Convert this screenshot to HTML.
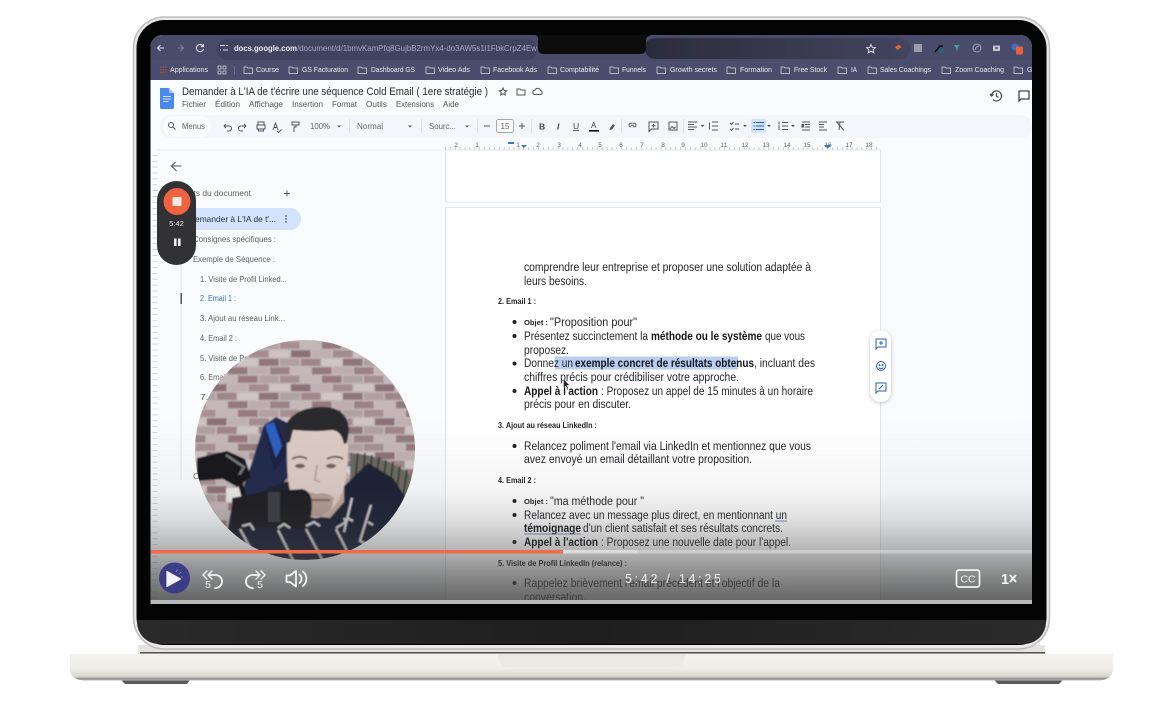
<!DOCTYPE html>
<html lang="fr"><head><meta charset="utf-8"><title>Demander à L'IA</title>
<style>
html,body{margin:0;padding:0;background:#fff;width:1173px;height:705px;overflow:hidden}
svg{display:block;font-family:"Liberation Sans",sans-serif}
.d{font-size:11.5px;fill:#25262a}
.db{font-size:11.5px;fill:#15161a;font-weight:bold}
.h{font-size:8px;fill:#25262a;font-weight:bold}
.o{font-size:7.5px;fill:#25262a;font-weight:bold}
.bm{font-size:7px;fill:#e8e9f0}
.m{font-size:8.5px;fill:#555}
.tb{font-size:8px;fill:#666}
.s{font-size:8.5px;fill:#5c5f63}
.ic{fill:none;stroke:#555;stroke-width:1}
.bi{fill:none;stroke:#d8dae4;stroke-width:.7}
.r{font-size:6.5px;fill:#666}
.w{fill:none;stroke:#f2f2f2;stroke-width:1.8;stroke-linecap:round;stroke-linejoin:round}
.ca{fill:none;stroke:#2a62b5;stroke-width:1}
</style></head><body>
<svg width="1173" height="705" viewBox="0 0 1173 705" xmlns="http://www.w3.org/2000/svg">
<defs>
<linearGradient id="base" x1="0" y1="0" x2="0" y2="1"><stop offset="0" stop-color="#f4f2ed"/><stop offset=".55" stop-color="#efede8"/><stop offset=".85" stop-color="#d9d6d1"/><stop offset=".94" stop-color="#8d8b87"/><stop offset="1" stop-color="#c9c7c3"/></linearGradient>
<linearGradient id="fade" x1="0" y1="0" x2="0" y2="1"><stop offset="0" stop-color="#444" stop-opacity="0"/><stop offset=".38" stop-color="#444" stop-opacity=".05"/><stop offset=".54" stop-color="#444" stop-opacity=".17"/><stop offset=".71" stop-color="#444" stop-opacity=".4"/><stop offset=".84" stop-color="#444" stop-opacity=".62"/><stop offset="1" stop-color="#444" stop-opacity=".85"/></linearGradient>
<linearGradient id="omni" x1="0" y1="0" x2="1" y2="0"><stop offset="0" stop-color="#2b2c3a"/><stop offset="1" stop-color="#43455f"/></linearGradient>
<linearGradient id="chin" x1="0" y1="0" x2="1" y2="0"><stop offset="0" stop-color="#2a2a2a"/><stop offset=".5" stop-color="#1e1e1e"/><stop offset="1" stop-color="#2b2b2b"/></linearGradient>
<clipPath id="scr"><path d="M150.500 604V47a12 12 0 0 1 12-12H1020a12 12 0 0 1 12 12V604z"/></clipPath>
<clipPath id="circ"><circle cx="305" cy="450" r="110"/></clipPath>
<filter id="soft" x="-2%" y="-2%" width="104%" height="104%"><feGaussianBlur stdDeviation=".3"/></filter>
<filter id="soft2" x="-5%" y="-5%" width="110%" height="110%"><feGaussianBlur stdDeviation=".8"/></filter>
<filter id="sh" x="-40%" y="-20%" width="180%" height="140%"><feDropShadow dx="0" dy="1" stdDeviation="2" flood-color="#000" flood-opacity=".22"/></filter>
<pattern id="brick" width="84" height="34" patternUnits="userSpaceOnUse" x="196" y="341">
<rect width="84" height="34" fill="#c2b8b9"/>
<g>
<rect x="0" y="0.8" width="19.5" height="7" fill="#a68f93"/><rect x="21" y="0.8" width="19.5" height="7" fill="#c4b5b7"/><rect x="42" y="0.8" width="19.5" height="7" fill="#97797f"/><rect x="63" y="0.8" width="19.5" height="7" fill="#b2a0a3"/>
<rect x="-10" y="9.3" width="19.5" height="7" fill="#cfc3c4"/><rect x="11" y="9.3" width="19.5" height="7" fill="#8c7078"/><rect x="32" y="9.3" width="19.5" height="7" fill="#c0b0b2"/><rect x="53" y="9.3" width="19.5" height="7" fill="#a48b90"/><rect x="74" y="9.3" width="19.5" height="7" fill="#cfc3c4"/>
<rect x="0" y="17.8" width="19.5" height="7" fill="#b0a0a2"/><rect x="21" y="17.8" width="19.5" height="7" fill="#a08589"/><rect x="42" y="17.8" width="19.5" height="7" fill="#d0c5c6"/><rect x="63" y="17.8" width="19.5" height="7" fill="#8f757b"/>
<rect x="-10" y="26.3" width="19.5" height="7" fill="#9b8287"/><rect x="11" y="26.3" width="19.5" height="7" fill="#c6b8b9"/><rect x="32" y="26.3" width="19.5" height="7" fill="#94797e"/><rect x="53" y="26.3" width="19.5" height="7" fill="#bdadaf"/><rect x="74" y="26.3" width="19.5" height="7" fill="#9b8287"/>
</g></pattern>
</defs>

<!-- base -->
<path d="M121 680h69l-3 4h-62z" fill="#5a5b5e"/>
<path d="M994 680h69l-4 4h-61z" fill="#5a5b5e"/>
<rect x="138" y="645" width="907" height="9" fill="#e6e4df"/>
<rect x="140" y="652" width="905" height="1.500" fill="#55534f"/>
<path d="M70 654H1113V668c0 8-5 12-14 12.500H84C75 680 70 676 70 668z" fill="url(#base)"/>
<path d="M497 654H686l-3 8a6 6 0 0 1-6 5H506a6 6 0 0 1-6-5z" fill="#ebe9e4"/>

<!-- Lid -->
<rect x="133.500" y="17" width="916" height="632" rx="31" fill="#e9e8e6" stroke="#bdbdbd" stroke-width="1.500"/>
<rect x="136.500" y="20" width="910" height="625" rx="28" fill="#040404"/>
<path d="M137 620H1046V622a22 22 0 0 1-22 22H159a22 22 0 0 1-22-22z" fill="url(#chin)"/>

<!-- Screen -->
<g clip-path="url(#scr)">
<rect x="150" y="35" width="882" height="570" fill="#f9fbfd"/>
<g filter="url(#soft)">
<rect x="150" y="35" width="882" height="25" fill="#4a4c6a"/>
<rect x="150" y="60" width="882" height="20" fill="#4c4e6c"/>
<rect x="217" y="39" width="320" height="21" rx="10" fill="#414360"/>
<rect x="645" y="38" width="265" height="21" rx="10" fill="url(#omni)"/>
<path d="M533 35H650V36a4 4 0 0 0-4 4V49a5 5 0 0 1-5 5H543a5 5 0 0 1-5-5V40a4 4 0 0 0-5-5z" fill="#08080a"/>
<g fill="none" stroke="#d8dae4" stroke-width="1.100">
<path d="M164 48h-6m2.500-3l-3 3 3 3"/><path d="M178 48h5m-2.500-3l3 3-3 3" stroke="#7f8198"/>
<path d="M203 46a3.600 3.600 0 1 0 .5 3M203.500 44v2.600h-2.600"/>
<path d="M220 45.500h5M223 50h5M226 45.500h2M220 50h1"/>
</g>
<text x="234" y="51" font-size="8.500" fill="#eceef5" font-weight="bold" textLength="63" lengthAdjust="spacingAndGlyphs">docs.google.com</text>
<text x="297" y="51" font-size="8.500" fill="#a7a9bd" textLength="240" lengthAdjust="spacingAndGlyphs">/document/d/1bmvKamPfq8GujbB2rmYx4-do3AW5s1l1FbkCrpZ4Ew</text>
<path d="M871 44.500l1.300 2.900 3.100.3-2.300 2.100.7 3-2.800-1.600-2.800 1.600.7-3-2.300-2.100 3.100-.3z" fill="none" stroke="#e6e7ef" stroke-width=".9"/>
<path d="M895 47l4-2.500 2.500 2.500-4 3z" fill="#e3642f"/>
<rect x="914" y="44" width="8" height="8" fill="#9a9cae"/>
<path d="M935 52l5-6 3 0" stroke="#111" stroke-width="1.400" fill="none"/><circle cx="941" cy="51" r="2.500" fill="#226a6e"/>
<path d="M954 45h6l-2 2-1 5-1-4z" fill="#3aa5a5"/>
<circle cx="977" cy="48" r="4" fill="none" stroke="#9a9cae"/><path d="M975 50l1.500-3 3-1.500" stroke="#9a9cae" fill="none"/>
<rect x="993" y="45.500" width="7" height="5.500" rx="1" fill="#c8c9d4"/><circle cx="996.500" cy="48" r="1.300" fill="#55566e"/>
<circle cx="1015" cy="47" r="3.500" fill="#3d6fb8"/><rect x="1016" y="46.500" width="7" height="8" rx="1" fill="#e8603c"/>

<!-- bookmarks -->
<g fill="#9a4a4a"><rect x="160" y="66.500" width="1.500" height="1.500"/><rect x="162.500" y="66.500" width="1.500" height="1.500"/><rect x="165" y="66.500" width="1.500" height="1.500"/><rect x="160" y="69" width="1.500" height="1.500"/><rect x="162.500" y="69" width="1.500" height="1.500"/><rect x="165" y="69" width="1.500" height="1.500"/><rect x="160" y="71.500" width="1.500" height="1.500"/><rect x="162.500" y="71.500" width="1.500" height="1.500"/><rect x="165" y="71.500" width="1.500" height="1.500"/></g>
<text x="170" y="72" class="bm" textLength="38" lengthAdjust="spacingAndGlyphs">Applications</text>
<g class="bi"><rect x="218" y="66" width="3" height="3"/><rect x="223" y="66" width="3" height="3"/><rect x="218" y="71" width="3" height="3"/><rect x="223" y="71" width="3" height="3"/></g>
<rect x="234" y="66" width=".8" height="9" fill="#777990"/>
<g class="bi">
<path d="M244 67h3l1 1h4.500v5.500H244z"/>
<path d="M289 67h3l1 1h4.500v5.500H289z"/><path d="M358 67h3l1 1h4.500v5.500H358z"/><path d="M426 67h3l1 1h4.500v5.500H426z"/><path d="M481 67h3l1 1h4.500v5.500H481z"/><path d="M548 67h3l1 1h4.500v5.500H548z"/><path d="M610 67h3l1 1h4.500v5.500H610z"/><path d="M657 67h3l1 1h4.500v5.500H657z"/><path d="M727 67h3l1 1h4.500v5.500H727z"/><path d="M781 67h3l1 1h4.500v5.500H781z"/><path d="M838 67h3l1 1h4.500v5.500H838z"/><path d="M868 67h3l1 1h4.500v5.500H868z"/><path d="M942 67h3l1 1h4.500v5.500H942z"/><path d="M1014 67h3l1 1h4.500v5.500H1014z"/>
</g>
<text x="256" y="72" class="bm" textLength="23" lengthAdjust="spacingAndGlyphs">Course</text>
<text x="302" y="72" class="bm" textLength="46" lengthAdjust="spacingAndGlyphs">GS Facturation</text>
<text x="371" y="72" class="bm" textLength="44" lengthAdjust="spacingAndGlyphs">Dashboard GS</text>
<text x="438" y="72" class="bm" textLength="32" lengthAdjust="spacingAndGlyphs">Video Ads</text>
<text x="493" y="72" class="bm" textLength="44" lengthAdjust="spacingAndGlyphs">Facebook Ads</text>
<text x="560" y="72" class="bm" textLength="39" lengthAdjust="spacingAndGlyphs">Comptabilité</text>
<text x="622" y="72" class="bm" textLength="24" lengthAdjust="spacingAndGlyphs">Funnels</text>
<text x="670" y="72" class="bm" textLength="47" lengthAdjust="spacingAndGlyphs">Growth secrets</text>
<text x="740" y="72" class="bm" textLength="32" lengthAdjust="spacingAndGlyphs">Formation</text>
<text x="794" y="72" class="bm" textLength="33" lengthAdjust="spacingAndGlyphs">Free Stock</text>
<text x="851" y="72" class="bm" textLength="6" lengthAdjust="spacingAndGlyphs">IA</text>
<text x="880" y="72" class="bm" textLength="51" lengthAdjust="spacingAndGlyphs">Sales Coachings</text>
<text x="955" y="72" class="bm" textLength="49" lengthAdjust="spacingAndGlyphs">Zoom Coaching</text>
<text x="1027" y="72" class="bm">G</text>

<!-- docs header -->
<rect x="150" y="80" width="882" height="35" fill="#f9fbfd"/>
<path d="M160 88h9l5 5v14.500a1.500 1.500 0 0 1-1.500 1.500h-11a1.500 1.500 0 0 1-1.500-1.500z" fill="#4a88ed"/><path d="M169 88l5 5h-5z" fill="#a9c6f7"/><path d="M163 96.500h8M163 99h8M163 101.500h5.500" stroke="#fff" stroke-width=".8"/>
<text x="182" y="95" font-size="11" fill="#2a2b2f" textLength="306" lengthAdjust="spacingAndGlyphs">Demander à L'IA de t'écrire une séquence Cold Email ( 1ere stratégie )</text>
<path d="M503 88l1.100 2.400 2.600.3-1.900 1.800.5 2.500-2.300-1.300-2.300 1.300.5-2.500-1.900-1.800 2.600-.3z" class="ic"/>
<path d="M517 89h3l1 1h4v5h-8z" class="ic"/>
<path d="M535 94.500a2.200 2.200 0 0 1 0-4.400 3 3 0 0 1 5.600.5 2 2 0 0 1 0 3.900z" class="ic"/>
<g class="m"><text x="182" y="107" textLength="24" lengthAdjust="spacingAndGlyphs">Fichier</text><text x="215" y="107" textLength="25" lengthAdjust="spacingAndGlyphs">Édition</text><text x="249" y="107" textLength="34" lengthAdjust="spacingAndGlyphs">Affichage</text><text x="292" y="107" textLength="31" lengthAdjust="spacingAndGlyphs">Insertion</text><text x="332" y="107" textLength="25" lengthAdjust="spacingAndGlyphs">Format</text><text x="366" y="107" textLength="21" lengthAdjust="spacingAndGlyphs">Outils</text><text x="396" y="107" textLength="38" lengthAdjust="spacingAndGlyphs">Extensions</text><text x="443" y="107" textLength="16" lengthAdjust="spacingAndGlyphs">Aide</text></g>
<g class="ic" style="stroke:#444;stroke-width:1.200"><path d="M991.500 96a5 5 0 1 1 1.500 3.500M990 94l1.500 2 2-1.500M996.500 93v3.200l2 1.300"/></g>
<path d="M1019 91h10v8h-8l-2 2z" class="ic" style="stroke:#444;stroke-width:1.300"/>

<!-- toolbar -->
<rect x="160" y="115" width="872" height="23" rx="11" fill="#f3f6fa"/>
<rect x="163" y="116" width="48" height="21" rx="10" fill="#f9fbfd"/>
<circle cx="171" cy="125" r="2.500" class="ic"/><path d="M173 127l2.500 2.500" class="ic"/>
<text x="182" y="129" class="tb" textLength="23" lengthAdjust="spacingAndGlyphs">Menus</text>
<g class="ic"><path d="M224 126h5a2 2 0 0 1 0 5h-2M224 126l2-2M224 126l2 2"/><path d="M246 126h-5a2 2 0 0 0 0 5h2M246 126l-2-2M246 126l-2 2"/><path d="M258 125v-3h6v3M257 125h8v4h-8zM258.500 129v2h5v-2"/><path d="M273 130l2.500-7 2.500 7M274 127.500h3M277 131l1.500 1.500 3-3"/><path d="M292 122h7v3h-7zM296 125v2h-2v5"/></g>
<text x="310" y="129" class="tb" textLength="20" lengthAdjust="spacingAndGlyphs">100%</text>
<path d="M337 125.500h4l-2 2z" fill="#555"/>
<rect x="349" y="119" width=".7" height="14" fill="#d5d8dc"/>
<text x="357" y="129" class="tb" textLength="26" lengthAdjust="spacingAndGlyphs">Normal</text>
<path d="M408 125.500h4l-2 2z" fill="#555"/>
<rect x="421" y="119" width=".7" height="14" fill="#d5d8dc"/>
<text x="429" y="129" class="tb" textLength="27" lengthAdjust="spacingAndGlyphs">Sourc...</text>
<path d="M465 125.500h4l-2 2z" fill="#555"/>
<rect x="477" y="119" width=".7" height="14" fill="#d5d8dc"/>
<path d="M484 126h6" stroke="#555"/>
<rect x="496.500" y="119.500" width="17" height="13" rx="2" fill="#fdfdfe" stroke="#888" stroke-width=".7"/>
<text x="505" y="129" class="tb" text-anchor="middle">15</text>
<path d="M519 126h6M522 123v6" stroke="#555"/>
<rect x="531" y="119" width=".7" height="14" fill="#d5d8dc"/>
<text x="539" y="129.500" font-size="8.500" font-weight="bold" fill="#444">B</text>
<text x="557" y="129.500" font-size="8.500" font-style="italic" font-weight="bold" fill="#444">I</text>
<text x="573" y="129" font-size="8.500" fill="#444" text-decoration="underline">U</text>
<text x="591" y="128" font-size="8" fill="#444">A</text><rect x="589" y="130" width="10" height="1.600" fill="#111"/>
<path d="M610 128l3-4 2 1.500-3 4-2.500.5z" fill="#555"/>
<rect x="621" y="119" width=".7" height="14" fill="#d5d8dc"/>
<g class="ic"><path d="M634 126h-1a2 2 0 0 1 0-3.500h2.500M636 126h2a2 2 0 0 0 0-3.500h-2M634 124.500h3" transform="translate(-3 .8)"/><path d="M649 122h9v7h-6.500L649 131.500zM653.500 124v3.500M651.500 125.700h4"/><rect x="669" y="122" width="8" height="8"/><path d="M670 129l2-2.500 2 2 1.500-1.500"/></g>
<rect x="683" y="119" width=".7" height="14" fill="#d5d8dc"/>
<g class="ic"><path d="M688 122h9M688 124.500h6M688 127h9M688 129.500h6"/><path d="M712 122h6M712 126h6M712 130h6M709.500 122.500v7"/><path d="M730 123l1.500 1.500 2-2.500M730 129l1.500 1.500 2-2.500M735 124h4M735 129h4"/></g>
<path d="M700.500 125h4l-2 2zM743 125h4l-2 2zM767 125h4l-2 2zM791 125h4l-2 2z" fill="#555"/>
<rect x="751" y="119" width="15" height="14" rx="2" fill="#d3e3fd"/>
<g stroke="#2f5fa8" stroke-width="1.100"><path d="M756 122.500h8M756 126h8M756 129.500h8"/><path d="M753.500 122.500h1.400M753.500 126h1.400M753.500 129.500h1.400"/></g>
<g class="ic"><path d="M782 122.500h6M782 126h6M782 129.500h6M779 121.500v3M779 125v5"/><path d="M802 122h8M805 124.500h5M805 127h5M802 130h8"/><rect x="802" y="124.500" width="1.500" height="2.500" fill="#555"/><path d="M819 122h8M819 124.500h5M819 127h5M819 130h8"/><path d="M836 122h8M840 122l-1 8M837 122.500l7 8"/></g>

<!-- ruler -->
<rect x="150" y="138" width="882" height="12" fill="#f9fbfd"/>
<path d="M445 148.500h435" stroke="#9a9a9a" stroke-width="2.500" stroke-dasharray=".7 4.200" opacity=".8"/>
<g class="r" text-anchor="middle"><text x="456" y="147">2</text><text x="477" y="147">1</text><text x="518" y="147">1</text><text x="538" y="147">2</text><text x="559" y="147">3</text><text x="580" y="147">4</text><text x="600" y="147">5</text><text x="621" y="147">6</text><text x="642" y="147">7</text><text x="663" y="147">8</text><text x="683" y="147">9</text><text x="704" y="147">10</text><text x="724" y="147">11</text><text x="745" y="147">12</text><text x="766" y="147">13</text><text x="787" y="147">14</text><text x="807" y="147">15</text><text x="828" y="147">16</text><text x="849" y="147">17</text><text x="869" y="147">18</text></g>
<rect x="508" y="142" width="6" height="2" fill="#3b73c5"/><path d="M521 145h6l-3 3z" fill="#3b73c5"/><path d="M824 145h7l-3.500 3.500z" fill="#3b73c5"/>

<!-- vertical ruler -->
<path d="M155 155V600" stroke="#b5b5b5" stroke-width="5" stroke-dasharray=".6 5.300" opacity=".9"/>

<!-- pages -->
<rect x="445.500" y="150" width="435" height="52" fill="#fff" stroke="#e3e5e8"/>
<rect x="445.500" y="207.500" width="435" height="420" fill="#fff" stroke="#e3e5e8"/>

<!-- sidebar -->
<path d="M157 150h285" stroke="#eceef0"/>
<path d="M181 176l-5-5h10M176 171l4-4" transform="translate(-4.500 -5)" fill="none" stroke="#555" stroke-width="1.100"/>
<text x="171" y="196" class="s" textLength="80" lengthAdjust="spacingAndGlyphs">Onglets du document</text>
<path d="M287 190.500v6M284 193.500h6" stroke="#555" stroke-width=".9"/>
<path d="M181 262V480" stroke="#dfe1e3"/>
<rect x="180.500" y="293" width="1.500" height="11" fill="#555"/>
<rect x="180" y="208" width="121" height="22" rx="11" fill="#d3e3fd"/>
<text x="189" y="222" font-size="8.500" fill="#27303f" textLength="87" lengthAdjust="spacingAndGlyphs">Demander à L'IA de t'...</text>
<g fill="#4a5568"><circle cx="286" cy="216" r=".9"/><circle cx="286" cy="219" r=".9"/><circle cx="286" cy="222" r=".9"/></g>
<text x="193" y="242" class="s" textLength="83" lengthAdjust="spacingAndGlyphs">Consignes spécifiques :</text>
<text x="193" y="262" class="s" textLength="82" lengthAdjust="spacingAndGlyphs">Exemple de Séquence :</text>
<text x="200" y="282" class="s" textLength="87" lengthAdjust="spacingAndGlyphs">1. Visite de Profil Linked...</text>
<text x="200" y="301" class="s" style="fill:#3f6fb5" textLength="36" lengthAdjust="spacingAndGlyphs">2. Email 1 :</text>
<text x="200" y="321" class="s" textLength="85" lengthAdjust="spacingAndGlyphs">3. Ajout au réseau Link...</text>
<text x="200" y="341" class="s" textLength="37" lengthAdjust="spacingAndGlyphs">4. Email 2 :</text>
<text x="200" y="361" class="s" textLength="87" lengthAdjust="spacingAndGlyphs">5. Visite de Profil Linked...</text>
<text x="200" y="380" class="s" textLength="37" lengthAdjust="spacingAndGlyphs">6. Email 3 :</text>
<text x="200" y="400" class="s" textLength="50" lengthAdjust="spacingAndGlyphs">7. Visite de</text>
<text x="193" y="479" class="s">C</text>

<!-- doc text -->
<rect x="555" y="356.500" width="183" height="13" fill="#b9cdf0"/>
<text x="524" y="271" class="d" textLength="287" lengthAdjust="spacingAndGlyphs">comprendre leur entreprise et proposer une solution adaptée à</text>
<text x="524" y="285" class="d" textLength="63" lengthAdjust="spacingAndGlyphs">leurs besoins.</text>
<text x="498" y="304" class="h" textLength="38" lengthAdjust="spacingAndGlyphs">2. Email 1 :</text>
<g fill="#222"><circle cx="514.500" cy="322" r="2"/><circle cx="514.500" cy="336" r="2"/><circle cx="514.500" cy="363.500" r="2"/><circle cx="514.500" cy="391" r="2"/><circle cx="514.500" cy="446" r="2"/><circle cx="514.500" cy="501" r="2"/><circle cx="514.500" cy="515" r="2"/><circle cx="514.500" cy="542" r="2"/><circle cx="514.500" cy="583" r="2"/></g>
<text x="524" y="325" class="o" textLength="24" lengthAdjust="spacingAndGlyphs">Objet :</text>
<text x="550" y="326" class="d" textLength="87" lengthAdjust="spacingAndGlyphs">"Proposition pour"</text>
<text x="524" y="340" class="d" textLength="124" lengthAdjust="spacingAndGlyphs">Présentez succinctement la</text>
<text x="651" y="340" class="db" textLength="111" lengthAdjust="spacingAndGlyphs">méthode ou le système</text>
<text x="765" y="340" class="d" textLength="40" lengthAdjust="spacingAndGlyphs">que vous</text>
<text x="524" y="354" class="d" textLength="45" lengthAdjust="spacingAndGlyphs">proposez.</text>
<text x="524" y="367" class="d" textLength="49" lengthAdjust="spacingAndGlyphs">Donnez un</text>
<text x="575" y="367" class="db" textLength="179" lengthAdjust="spacingAndGlyphs">exemple concret de résultats obtenus</text>
<text x="754" y="367" class="d" textLength="61" lengthAdjust="spacingAndGlyphs">, incluant des</text>
<text x="524" y="381" class="d" textLength="215" lengthAdjust="spacingAndGlyphs">chiffres précis pour crédibiliser votre approche.</text>
<text x="524" y="395" class="db" textLength="74" lengthAdjust="spacingAndGlyphs">Appel à l'action</text>
<text x="601" y="395" class="d" textLength="212" lengthAdjust="spacingAndGlyphs">: Proposez un appel de 15 minutes à un horaire</text>
<text x="524" y="408" class="d" textLength="107" lengthAdjust="spacingAndGlyphs">précis pour en discuter.</text>
<text x="498" y="428" class="h" textLength="99" lengthAdjust="spacingAndGlyphs">3. Ajout au réseau LinkedIn :</text>
<text x="524" y="450" class="d" textLength="287" lengthAdjust="spacingAndGlyphs">Relancez poliment l'email via LinkedIn et mentionnez que vous</text>
<text x="524" y="463" class="d" textLength="228" lengthAdjust="spacingAndGlyphs">avez envoyé un email détaillant votre proposition.</text>
<text x="498" y="483" class="h" textLength="38" lengthAdjust="spacingAndGlyphs">4. Email 2 :</text>
<text x="524" y="504" class="o" textLength="24" lengthAdjust="spacingAndGlyphs">Objet :</text>
<text x="550" y="505" class="d" textLength="94" lengthAdjust="spacingAndGlyphs">"ma méthode pour "</text>
<text x="524" y="519" class="d" textLength="263" lengthAdjust="spacingAndGlyphs">Relancez avec un message plus direct, en mentionnant un</text>
<text x="524" y="532" class="db" textLength="57" lengthAdjust="spacingAndGlyphs">témoignage</text>
<text x="583" y="532" class="d" textLength="200" lengthAdjust="spacingAndGlyphs">d'un client satisfait et ses résultats concrets.</text>
<path d="M775 521h12M524 534h57" stroke="#5a6fa8" stroke-width=".7"/>
<text x="524" y="546" class="db" textLength="74" lengthAdjust="spacingAndGlyphs">Appel à l'action</text>
<text x="601" y="546" class="d" textLength="190" lengthAdjust="spacingAndGlyphs">: Proposez une nouvelle date pour l'appel.</text>
<text x="498" y="566" class="h" textLength="129" lengthAdjust="spacingAndGlyphs">5. Visite de Profil LinkedIn (relance) :</text>
<text x="524" y="587" class="d" textLength="256" lengthAdjust="spacingAndGlyphs">Rappelez brièvement l'email précédent et l'objectif de la</text>
<text x="524" y="601" class="d" textLength="62" lengthAdjust="spacingAndGlyphs">conversation.</text>
<path d="M563.500 379v9l2.200-2 1.800 3 1-.7-1.600-2.800 2.600-.3z" fill="#222" stroke="#fff" stroke-width=".4"/>

<!-- comment rail -->
<rect x="870" y="330" width="21" height="72" rx="10.500" fill="#fff" filter="url(#sh)"/>
<g class="ca"><path d="M876 339h10v8h-8l-2 2zM881 341v4M879 343h4"/><circle cx="881" cy="366" r="4.500"/><circle cx="879.500" cy="365" r=".5"/><circle cx="882.500" cy="365" r=".5"/><path d="M878.800 367.500a2.600 2.600 0 0 0 4.400 0"/><path d="M876 383h10v8h-8l-2 2zM879 389l4-4"/></g>
</g>
</g>

<!-- webcam bubble -->
<g clip-path="url(#circ)"><g filter="url(#soft2)">
<rect x="190" y="335" width="230" height="230" fill="url(#brick)"/>
<!-- chair -->
<path d="M264 425l12-8 20 10-8 50-20 25-36 20 20-60z" fill="#232c4e"/>
<path d="M264 428l12-6 12 30-14 20z" fill="#1d2442"/>
<path d="M265 425l9-3 8 24-6 12z" fill="#2f5ec0"/>
<path d="M345 470l12-13 24 30-10 12z" fill="#d7dbe8"/>
<path d="M348 465l6-6 26 28-4 6z" fill="#3a56a0"/>
<rect x="226" y="488" width="16" height="14" fill="#e8e8e6"/>
<!-- mic arm -->
<path d="M197 458l30-7 18 8 6 18-14 10-14-8-26 2z" fill="#18181b"/>
<path d="M226 455l18 12-6 10" fill="none" stroke="#77787c" stroke-width="2.500"/>
<path d="M238 475l6 22" stroke="#141416" stroke-width="5"/>
<!-- coil -->
<path d="M350 453c22 1 48 10 63 25l-6 30-22-6-35-14z" fill="#6c6a60"/>
<g stroke="#2f2f2d" stroke-width="1.600"><path d="M358 453l-3 28M365 453l-3 32M372 455l-3 32M379 457l-4 33M386 460l-4 32M393 462l-4 32M400 466l-4 30M407 470l-4 28"/></g>
<!-- shirt -->
<path d="M222 560l10-55 50-23 30 0 28 8 28-27 25 15 16 25-8 30-10 27z" fill="#1d2134"/>
<!-- neck, face -->
<path d="M300 490h40l4-8v20l-14 16-20-2-12-14z" fill="#bfa89e"/>
<path d="M287 445c0-20 16-28 31-28s30 9 30 28c0 22-1 38-8 52-6 13-16 21-24 21-9 0-19-8-24-21-5-14-5-32-5-52z" fill="#dccbc4"/>
<path d="M300 498c6-6 12-6 17-4 7-2 13 0 17 4l-3 12-10 7h-10l-8-7z" fill="#b79f95"/>
<path d="M306 500h24" stroke="#7d645a" stroke-width="2"/>
<path d="M285 434c-2-14 12-26 34-27 17-1 30 6 30 24l-2 12-3 1c-2-9-5-13-12-14-14 2-28 1-39 0l-3 12-3 1z" fill="#2a2a2d"/>
<path d="M292 459c5-3 11-3 15 0M327 459c5-3 12-3 16 0" stroke="#5d4c47" stroke-width="1.800" fill="none"/>
<ellipse cx="300" cy="466" rx="5" ry="2.200" fill="#6f5e5c"/><ellipse cx="331" cy="466" rx="5" ry="2.200" fill="#6f5e5c"/>
<path d="M317 465l-2 15 5 2" stroke="#ab958c" stroke-width="1.400" fill="none"/>
<!-- mic -->
<path d="M232 498l32-6 38-3c6 1 10 6 10 16 0 11-3 22-10 24l-28-3-42 4z" fill="#1c1c22"/>
<rect x="268" y="492" width="12" height="30" fill="#4a4a52" opacity=".75"/>
<!-- shirt chevrons -->
<g fill="none" stroke="#d6d6d8" stroke-width="2.100">
<path d="M242 526l8-2 4 6M240 529l13 24"/><path d="M278 528l6-4 6 4M278 530l16 32"/><path d="M306 526l8-4 6 4M306 529l16 30"/><path d="M336 528l10-6-2-4M336 529l14 28"/>
<path d="M352 498l-8 34M347 518l6 3"/><path d="M371 505l-11 36 8 4M368 522l5 3"/>
</g>
</g></g>

<!-- gradient overlay -->
<g clip-path="url(#scr)">
<rect x="150" y="420" width="882" height="184" fill="url(#fade)"/>
<rect x="150" y="600" width="882" height="4" fill="#b9b9b9"/>
<rect x="150" y="550" width="882" height="3.500" fill="#e8e8e8" opacity=".45"/>
<rect x="563" y="550" width="74" height="3.500" fill="#dedede" opacity=".85"/>
<rect x="150" y="550" width="413" height="3.500" fill="#f16b4b"/>
</g>

<!-- recorder pill -->
<g filter="url(#soft)">
<rect x="157" y="181" width="39" height="84" rx="19.500" fill="#333335"/>
<circle cx="177" cy="201.500" r="13.500" fill="#f0633f"/>
<rect x="172.500" y="197" width="9" height="9" rx="1" fill="#f3e9e4"/>
<text x="176.500" y="226" font-size="7.500" fill="#e8e8e8" text-anchor="middle">5:42</text>
<rect x="174" y="238.500" width="2.600" height="7.500" fill="#f0f0f0"/><rect x="178" y="238.500" width="2.600" height="7.500" fill="#f0f0f0"/>
</g>

<!-- player controls -->
<g filter="url(#soft)">
<circle cx="174.500" cy="578" r="15.500" fill="#3b3e86"/>
<path d="M167 571.500l13.500 7.500-13.500 7.500z" fill="#f4f4f6" stroke="#f4f4f6" stroke-width="1.200" stroke-linejoin="round"/>
<path d="M176 572l1.500-2.500M179 574l2.500-2M181 577h2" stroke="#8f8fb8" stroke-width=".8"/>
<g class="w"><path d="M210 575h5a6.500 6.500 0 0 1 3 12.500l-3 .7"/><path d="M212 571l-4 4 4 4M207 571l-4 4 4 4" stroke-width="1.400"/></g>
<text x="208" y="588" font-size="10.500" fill="#f2f2f2" text-anchor="middle">5</text>
<g class="w"><path d="M258 575h-5a6.500 6.500 0 0 0-3 12.500l3 .7"/><path d="M256 571l4 4-4 4M261 571l4 4-4 4" stroke-width="1.400"/></g>
<text x="260" y="588" font-size="10.500" fill="#f2f2f2" text-anchor="middle">5</text>
<g class="w"><path d="M286.500 575.500h3.500l6-4.500v15.500l-6-4.500h-3.500z"/><path d="M299.500 574.500a5.500 5.500 0 0 1 0 8.500M303 571.500a9.500 9.500 0 0 1 0 14.500"/></g>
<text x="625" y="583" font-size="12.500" fill="#f0f0f0" textLength="96">5:42 / 14:25</text>
<rect x="956.500" y="570" width="23" height="17" rx="2.500" fill="none" stroke="#f4f4f4" stroke-width="1.700"/>
<text x="968" y="582.500" font-size="10.500" fill="#f4f4f4" text-anchor="middle">CC</text>
<text x="1001" y="584" font-size="14.500" font-weight="bold" fill="#f4f4f4">1</text>
<path d="M1010 575l6 7M1016 575l-6 7" stroke="#f4f4f4" stroke-width="1.900"/>
</g>
</svg>
</body></html>
